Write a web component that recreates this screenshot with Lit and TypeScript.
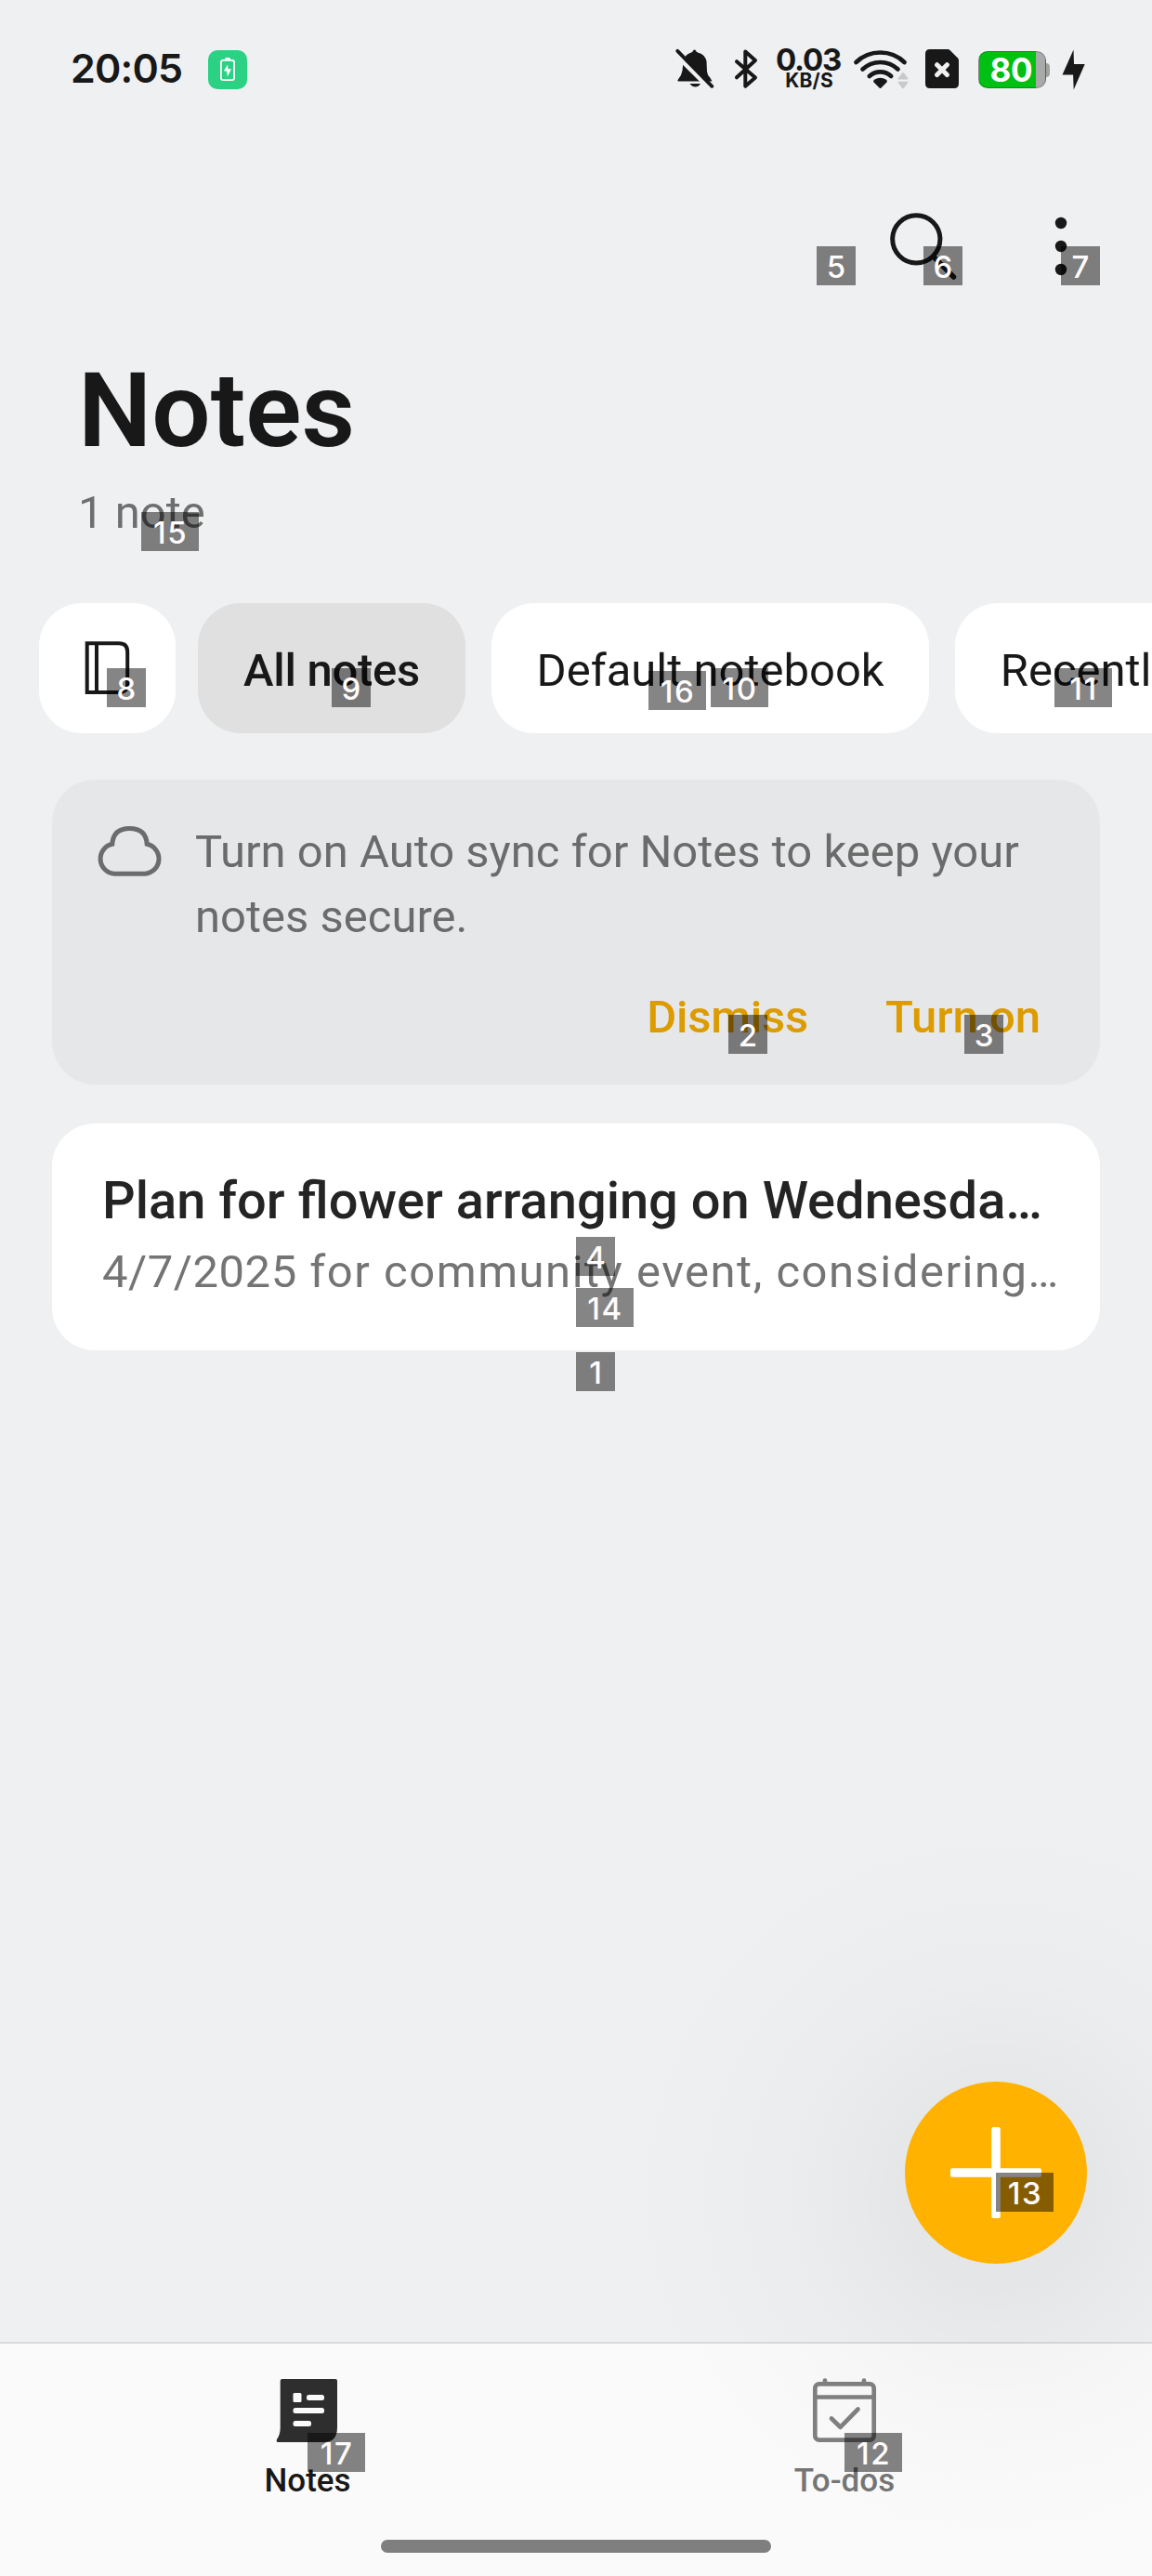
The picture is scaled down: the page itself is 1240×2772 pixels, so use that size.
import { LitElement, html, css, svg } from "lit";
import { customElement } from "lit/decorators.js";
import { classMap } from "lit/directives/class-map.js";
import { styleMap } from "lit/directives/style-map.js";

// Element index markers floating over the screen: [number, left, top]
const MARKERS: [number, number, number][] = [
  [5, 879, 265], [6, 994, 265], [7, 1142, 265],
  [15, 152, 551],
  [8, 115, 719], [9, 357, 719], [16, 698, 722], [10, 765, 719], [11, 1135, 719],
  [2, 784, 1092], [3, 1038, 1092],
  [4, 620, 1331], [14, 620, 1386], [1, 620, 1455],
  [13, 1072, 2338], [12, 909, 2618], [17, 331, 2618],
];

const CHIPS = [
  { label: "All notes", active: true },
  { label: "Default notebook", active: false },
  { label: "Recently deleted", active: false },
];

const icon = (cls: string, box: string, body: unknown) =>
  html`<svg class=${cls} viewBox=${box} fill="none" aria-hidden="true">${body}</svg>`;

const charge = icon("charge", "0 0 42 42", svg`
  <rect x="13.9" y="10.9" width="14.2" height="21.2" rx="2.4" stroke="#fff" stroke-width="1.8"/>
  <path d="M18 10q0-2 1.500-2h3q1.500 0 1.500 2z" fill="#fff"/>
  <path d="M21 15.500l-4.200 6.900h3.200l.8 6 4.200-8.200h-3.400z" fill="#fff"/>`);

const bell = icon("bell", "727 52 42 44", svg`
  <path d="M730.500 87.500q-2 0-.5-2 3.500-4 4.500-9.500l1-10q1-7 8.500-9.500 1.500 0 2-2 1.500-2 3 0 .5 1.500 2 2 8 2 9.500 9.500l.5 11q.5 4 3 6l2.500 4.500z" fill="#181818"/>
  <path d="M742.500 90h11.500q-2 3.500-5.500 3.500t-6-3.500z" fill="#181818"/>
  <path d="M726 57.500l37 37" stroke="#eff0f2" stroke-width="4.500"/>
  <path d="M727 62l9-3 1.500 9-4 2z" fill="#eff0f2"/>
  <path d="M729.300 54.800l37 38" stroke="#181818" stroke-width="3.800" stroke-linecap="round"/>`);

const bluetooth = icon("bt", "789 52 28 44", svg`
  <path d="M793 66.200l20 17.300-10.700 9.300V55.500l10.700 9.500-20 18.300" stroke="#181818" stroke-width="4" stroke-linejoin="round" stroke-linecap="round"/>`);

const wifi = icon("wifi", "918 52 62 44", svg`
  <g stroke="#181818" stroke-width="4.700" stroke-linecap="round">
    <path d="M921.500 67a37.500 37.500 0 0 1 52 0"/>
    <path d="M928.500 74.500a27.800 27.800 0 0 1 38 0"/>
    <path d="M935.800 82a17 17 0 0 1 23.400 0"/>
  </g>
  <path d="M940.500 88.500q-1-1.500.5-2.800 6.500-4 13 0 1.500 1.300.5 2.800l-6 6q-1 1-2 0z" fill="#181818"/>
  <path d="M966.500 84.500l4.500-6q1-1 2 0l4.500 6q.5 1-1 1h-9q-1.500 0-1-1zM966.500 88.700l4.500 6q1 1 2 0l4.500-6q.5-1-1-1h-9q-1.500 0-1 1z" fill="#c8c9ca"/>`);

const sim = icon("sim", "996 53 36 42", svg`
  <path d="M1001 53h19.500q1 0 2 1l8.500 8.500q1 1 1 2.500v25q0 5-5 5h-26q-5 0-5-5V58q0-5 5-5z" fill="#181818"/>
  <path d="M1008.600 69.700l10.800 10.800m0-10.800l-10.800 10.800" stroke="#eff0f2" stroke-width="5" stroke-linecap="round"/>`);

const bolt = icon("bolt", "1143 53 25 44", svg`
  <path d="M1155.500 53.500l-12 27h11.600l.6 16 12-27.500h-11.700z" fill="#181818"/>`);

const search = icon("search", "957 228 74 74", svg`
  <circle cx="986.300" cy="257.300" r="25.600" stroke="#181818" stroke-width="5"/>
  <path d="M1004.500 276l22 22" stroke="#181818" stroke-width="5.500" stroke-linecap="round"/>`);

const more = icon("more", "1135 233 14 64", svg`
  <g fill="#181818"><circle cx="1142" cy="240" r="6.200"/><circle cx="1142" cy="265" r="6.200"/><circle cx="1142" cy="290" r="6.200"/></g>`);

const book = icon("book", "91 690 49 58", svg`
  <path d="M93.700 692.300H128q9.200 0 9.200 9.200v34.200q0 9.200-9.200 9.200H93.700zM104 692v53" stroke="#181818" stroke-width="4"/>`);

const cloud = icon("cloud", "104 888 71 56", svg`
  <path d="M123.500 940.300H156a16.200 16.200 0 0 0 2.200-32q-1.200-16.700-18.700-16.700t-18.700 16.700a16.200 16.200 0 0 0 2.700 32z" stroke="#6c6c6c" stroke-width="5"/>`);

const notesIcon = icon("tab-icon", "297 2556 70 76", svg`
  <path d="M302.700 2562q0-2 2-2H362q2 0 2 2v50q0 16-14 16h-50q-2 0-1-3 3.700-5 3.700-13z" fill="#2e2e2e"/>
  <g fill="#fafafa"><rect x="316.500" y="2575" width="9" height="10" rx="1.500"/><rect x="331" y="2577" width="19" height="6" rx="2.500"/>
  <rect x="316.500" y="2591" width="33.500" height="6" rx="2.500"/><rect x="316.500" y="2605" width="19.500" height="6" rx="2.500"/></g>`);

const todosIcon = icon("tab-icon", "874 2556 70 76", svg`
  <g stroke="#808080" stroke-width="4.700" stroke-linecap="round" stroke-linejoin="round">
    <path d="M888 2561.500v1.500M930 2561.500v1.500"/>
    <rect x="877.300" y="2565.300" width="63.400" height="60.400" rx="4.500"/>
    <path d="M877.300 2579.500h63.400" stroke-linecap="butt"/>
    <path d="M895 2602.500l9.500 9.300 19-19.300"/>
  </g>`);

const plus = icon("plus", "0 0 98 98", svg`
  <rect x="0" y="44.200" width="98" height="9.600" rx="2" fill="#fff"/><rect x="44.200" y="0" width="9.600" height="98" rx="2" fill="#fff"/>`);

@customElement("app-root")
export class AppRoot extends LitElement {
  static styles = css`
    :host {
      display: block;
      position: relative;
      width: 1240px;
      height: 2772px;
      overflow: hidden;
      background: #eff0f2;
      color: #181818;
      font-family: Roboto, "Liberation Sans", sans-serif;
    }
    * { box-sizing: border-box; }
    svg { display: block; flex: none; }
    .screen { display: flex; flex-direction: column; height: 2772px; }

    .status { display: flex; align-items: center; height: 150px; padding-left: 76px; font-family: Inter, sans-serif; font-weight: 600; }
    .time { width: 148px; font-size: 43px; line-height: 50px; letter-spacing: -0.8px; padding-bottom: 4px; }
    .charge { width: 42px; height: 42px; border-radius: 10px; background: #2cd284; }
    .bell { width: 42px; height: 44px; margin-left: 461px; margin-top: -2px; }
    .bt { width: 28px; height: 44px; margin-left: 20px; margin-top: -2px; }
    .speed { width: 80px; margin-left: 13px; margin-top: -2px; display: flex; flex-direction: column; align-items: center; }
    .rate { font-size: 33px; line-height: 24px; letter-spacing: -1.2px; font-weight: 650; }
    .unit { font-size: 21px; line-height: 18px; margin-top: 2px; letter-spacing: 0.2px; font-weight: 700; padding-left: 2px; }
    .wifi { width: 62px; height: 44px; margin-left: 8px; margin-top: -2px; }
    .sim { width: 36px; height: 42px; margin-left: 16px; margin-top: -2px; }
    .battery { display: flex; align-items: center; margin-left: 21px; }
    .cell { display: flex; align-items: center; justify-content: flex-end; width: 73px; height: 40px; padding-right: 14px; border-radius: 10px;
      border: 1px solid rgba(0,0,0,.22); background: linear-gradient(90deg, #00c013 61px, #a9a9a9 61px); color: #fff; font-size: 35px; font-weight: 700; line-height: 38px; letter-spacing: -0.5px; }
    .nub { width: 4px; height: 15px; border-radius: 0 4px 4px 0; background: #a0a0a0; }
    .bolt { width: 25px; height: 44px; margin-left: 13px; }

    .tools { display: flex; align-items: center; justify-content: flex-end; height: 230px; padding-right: 91px; gap: 104px; }
    .search { width: 74px; height: 74px; }
    .more { width: 14px; height: 64px; }

    .heading { padding: 6px 84px 0; height: 269px; }
    h1 { margin: 0; font-size: 112px; line-height: 112px; font-weight: 600; }
    .count { margin-top: 24px; font-size: 49px; line-height: 60px; color: #6d6e6d; }

    .chips { display: flex; width: 1240px; height: 140px; padding-left: 42px; overflow: hidden; }
    .chip { flex: none; display: flex; align-items: center; height: 140px; padding: 5px 48.5px 0; margin-right: 28px; border-radius: 46px; background: #fff; font-size: 49px; line-height: 60px; white-space: nowrap; }
    .chip.active { background: #e0e0e0; font-weight: 500; letter-spacing: -0.3px; padding-left: 49px; width: 288px; }
    .chip.books { width: 147px; margin-right: 24px; justify-content: center; padding: 0; }
    .book { width: 49px; height: 58px; }

    .sync { margin: 50px 56px 0; height: 328px; border-radius: 46px; background: #e6e7e9; padding: 43px 64px 0 48px; }
    .msg { display: flex; gap: 35px; }
    .cloud { width: 71px; height: 56px; margin-top: 6px; }
    .msg p { margin: 0; width: 910px; font-size: 49px; line-height: 70px; color: #6a6b6a; }
    .actions { display: flex; justify-content: flex-end; gap: 83px; margin-top: 43px; font-size: 49px; line-height: 60px; font-weight: 500; color: #dc9c00; }
    .dismiss { letter-spacing: -0.2px; }

    .note { margin: 42px 56px 0; height: 244px; border-radius: 46px; background: #fff; padding: 48px 44px 0 54px; }
    .title { font-size: 56px; line-height: 70px; font-weight: 500; color: #242424; white-space: nowrap; }
    .body { margin-top: 12px; font-size: 49px; line-height: 60px; letter-spacing: 1.5px; color: #747474; white-space: nowrap; }
    .date { letter-spacing: 0.5px; }

    .nav { margin-top: auto; height: 252px; border-top: 2px solid #d9dadc; background: #fafafa; display: flex; flex-direction: column; align-items: center; }
    .tabs { display: flex; width: 1156px; height: 211px; }
    .tab { flex: 1; display: flex; flex-direction: column; align-items: center; padding-top: 34px; font-size: 35px; line-height: 40px; font-weight: 500; color: #757575; }
    .tab.on { color: #181818; }
    .tab-icon { width: 70px; height: 76px; margin-bottom: 18px; }
    .home { width: 420px; height: 14px; border-radius: 7px; background: #7f7f7f; }

    .glow { position: absolute; left: 642px; top: 1930px; width: 860px; height: 860px; opacity: .1; pointer-events: none;
      background: radial-gradient(circle 430px at center, rgba(0,0,0,.52) 0, rgba(0,0,0,.42) 98px, rgba(0,0,0,.315) 140px, rgba(0,0,0,.273) 160px, rgba(0,0,0,.231) 182px,
        rgba(0,0,0,.189) 206px, rgba(0,0,0,.147) 232px, rgba(0,0,0,.105) 268px, rgba(0,0,0,.063) 313px, rgba(0,0,0,.021) 377px, rgba(0,0,0,0) 430px); }
    .fab { position: absolute; left: 974px; top: 2240px; width: 196px; height: 196px; border-radius: 50%; background: #ffb200; display: flex; align-items: center; justify-content: center; }
    .plus { width: 98px; height: 98px; }

    .marker { position: absolute; height: 42px; min-width: 42px; display: flex; align-items: center; justify-content: center; background: rgba(0,0,0,.48); color: #fffcfc;
      font: 500 33px/42px Inter, sans-serif; padding-top: 2px; }
    .marker.wide { width: 62px; letter-spacing: 1.5px; padding-left: 1px; }
  `;

  render() {
    return html`
      <div class="screen">
        <div class="status">
          <span class="time">20:05</span>${charge}
          ${bell}${bluetooth}
          <div class="speed"><span class="rate">0.03</span><span class="unit">KB/S</span></div>
          ${wifi}${sim}
          <div class="battery"><span class="cell">80</span><span class="nub"></span></div>
          ${bolt}
        </div>
        <div class="tools">${search}${more}</div>
        <div class="heading">
          <h1>Notes</h1>
          <div class="count">1 note</div>
        </div>
        <div class="chips">
          <div class="chip books">${book}</div>
          ${CHIPS.map((c) => html`<div class=${classMap({ chip: true, active: c.active })}>${c.label}</div>`)}
        </div>
        <section class="sync">
          <div class="msg">${cloud}<p>Turn on Auto sync for Notes to keep your notes secure.</p></div>
          <div class="actions"><span class="dismiss">Dismiss</span><span>Turn on</span></div>
        </section>
        <section class="note">
          <div class="title">Plan for flower arranging on Wednesda…</div>
          <div class="body"><span class="date">4/7/2025</span> for community event, considering…</div>
        </section>
        <nav class="nav">
          <div class="tabs">
            <div class="tab on">${notesIcon}<span>Notes</span></div>
            <div class="tab">${todosIcon}<span>To-dos</span></div>
          </div>
          <div class="home"></div>
        </nav>
      </div>
      <div class="glow"></div>
      <div class="fab">${plus}</div>
      ${MARKERS.map(([n, x, y]) => html`<span class=${classMap({ marker: true, wide: n > 9 })}
        style=${styleMap({ left: `${x}px`, top: `${y}px` })}>${n}</span>`)}
    `;
  }
}
